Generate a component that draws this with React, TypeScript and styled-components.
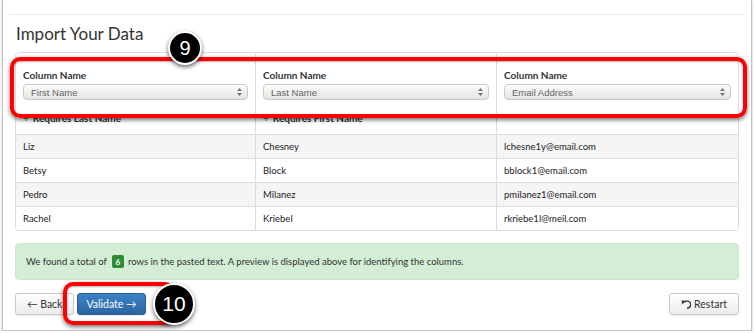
import React from "react";
import styled, { createGlobalStyle } from "styled-components";

const Global = createGlobalStyle`
  html, body { margin: 0; padding: 0; background: #fff; }
  body { font-family: Lato, "Open Sans", Arial, sans-serif; color: #333; }
`;

const Card = styled.div`
  position: relative;
  display: flow-root;
  box-sizing: border-box;
  margin-left: 2px;
  width: 750px;
  height: 331px;
  border: 1px solid #c4c4c4;
  border-top: none;
  box-shadow: 0 1px 2px rgba(0, 0, 0, 0.25);
  padding: 0 12px;
  background: #fff;
`;

const Rule = styled.div`
  margin: 14px -6px 0;
  height: 1px;
  background: #ececec;
`;

const Title = styled.h1`
  margin: 9px 0 0 1px;
  font-size: 17px;
  line-height: 20px;
  font-weight: 400;
  color: #333;
`;

const Table = styled.div`
  margin-top: 8px;
  border: 1px solid #dcdcdc;
  border-radius: 4px;
  display: grid;
  grid-template-columns: 240px 241px 1fr;
  overflow: hidden;
`;

const HeadCell = styled.div<{ $last?: boolean }>`
  box-sizing: border-box;
  height: 81px;
  padding: 16px 7px 0 7px;
  border-right: ${(p) => (p.$last ? "none" : "1px solid #dcdcdc")};
`;

const Label = styled.div`
  font-size: 10px;
  line-height: 12px;
  font-weight: 700;
  color: #333;
`;

const Select = styled.div`
  margin-top: 3px;
  box-sizing: border-box;
  height: 16px;
  border: 1px solid #c8c8c8;
  border-radius: 4px;
  background: linear-gradient(#fbfbfb, #e4e4e4);
  box-shadow: 0 1px 0 rgba(255, 255, 255, 0.8) inset;
  display: flex;
  align-items: center;
  justify-content: space-between;
  padding: 0 5px 0 7px;
  font-family: "Liberation Sans", Arial, sans-serif;
  font-size: 9.5px;
  color: #666;
`;

const Requires = styled.div`
  margin-top: 12px;
  font-size: 10px;
  line-height: 12px;
  font-weight: 700;
  color: #333;
  display: flex;
  gap: 4px;
  span { color: #3a9a3a; }
`;

const Cell = styled.div<{ $stripe?: boolean; $last?: boolean }>`
  box-sizing: border-box;
  height: 24px;
  border-top: 1px solid #dcdcdc;
  border-right: ${(p) => (p.$last ? "none" : "1px solid #dcdcdc")};
  background: ${(p) => (p.$stripe ? "#f5f5f5" : "#fff")};
  padding: 0 7px;
  display: flex;
  align-items: center;
  font-size: 9.5px;
  color: #222;
`;

const Alert = styled.div`
  margin-top: 12px;
  box-sizing: border-box;
  height: 37px;
  background: #d4edd5;
  border: 1px solid #cbe6c9;
  border-radius: 4px;
  padding: 0 10px;
  display: flex;
  align-items: center;
  font-size: 9.5px;
  color: #333;
`;

const Badge = styled.span`
  display: inline-flex;
  align-items: center;
  justify-content: center;
  margin: 0 4px 0 5px;
  width: 12px;
  height: 13px;
  border-radius: 2px;
  background: #2f8b36;
  color: #fff;
  font-weight: 700;
  font-size: 8px;
`;

const Actions = styled.div`
  margin-top: 13px;
  display: flex;
  align-items: center;
  gap: 3px;
`;

const Button = styled.button<{ $primary?: boolean }>`
  box-sizing: border-box;
  height: 22px;
  padding: 0 ${(p) => (p.$primary ? "8px" : "11px")};
  border-radius: 3px;
  font-family: inherit;
  font-size: 10.5px;
  display: inline-flex;
  align-items: center;
  gap: 3px;
  cursor: pointer;
  border: 1px solid ${(p) => (p.$primary ? "#2a5f95" : "#c9c9c9")};
  color: ${(p) => (p.$primary ? "#fff" : "#333")};
  background: ${(p) =>
    p.$primary
      ? "linear-gradient(#3d82c4, #2b66a3)"
      : "linear-gradient(#ffffff, #ececec)"};
  box-shadow: 0 1px 1px rgba(0, 0, 0, 0.08);
`;

const Spacer = styled.div`
  flex: 1;
`;

const Frame = styled.div<{ $l: number; $t: number; $w: number; $h: number }>`
  position: absolute;
  left: ${(p) => p.$l}px;
  top: ${(p) => p.$t}px;
  width: ${(p) => p.$w}px;
  height: ${(p) => p.$h}px;
  box-sizing: border-box;
  border: 4px solid #ff0000;
  border-radius: 10px;
  box-shadow: 0 2px 4px rgba(0, 0, 0, 0.55), inset 0 1px 2px rgba(0, 0, 0, 0.3);
  pointer-events: none;
`;

const Marker = styled.div<{ $l: number; $t: number; $d: number; $fs: number }>`
  position: absolute;
  left: ${(p) => p.$l}px;
  top: ${(p) => p.$t}px;
  width: ${(p) => p.$d}px;
  height: ${(p) => p.$d}px;
  box-sizing: border-box;
  border-radius: 50%;
  background: #000;
  border: 2px solid #fff;
  box-shadow: 0 2px 4px rgba(0, 0, 0, 0.6);
  color: #fff;
  font-family: "Liberation Sans", Arial, sans-serif;
  font-size: ${(p) => p.$fs}px;
  display: flex;
  align-items: center;
  justify-content: center;
`;

const Arrows = () => (
  <svg width="5" height="8" viewBox="0 0 5 8">
    <path d="M2.5 0 L5 3 H0 Z M2.5 8 L5 5 H0 Z" fill="#777" />
  </svg>
);

const UndoIcon = () => (
  <svg width="10" height="9" viewBox="0 0 10 9">
    <path d="M3.5 2.2 A3.6 3.6 0 1 1 6 8.3" fill="none" stroke="#333" strokeWidth="1.4" />
    <path d="M0.5 0.5 L4.8 0.8 L1.2 4.6 Z" fill="#333" />
  </svg>
);

const columns = [
  { sel: "First Name", req: "Requires Last Name" },
  { sel: "Last Name", req: "Requires First Name" },
  { sel: "Email Address", req: "" },
];

const rows = [
  ["Liz", "Chesney", "lchesne1y@email.com"],
  ["Betsy", "Block", "bblock1@email.com"],
  ["Pedro", "Milanez", "pmilanez1@email.com"],
  ["Rachel", "Kriebel", "rkriebe1l@meil.com"],
];

export default function App() {
  return (
    <>
      <Global />
      <Card>
        <Rule />
        <Title>Import Your Data</Title>
        <Table>
          {columns.map((c, i) => (
            <HeadCell key={i} $last={i === 2}>
              <Label>Column Name</Label>
              <Select>
                <span>{c.sel}</span>
                <Arrows />
              </Select>
              {c.req && (
                <Requires>
                  <span>+</span>
                  {c.req}
                </Requires>
              )}
            </HeadCell>
          ))}
          {rows.map((r, ri) =>
            r.map((v, ci) => (
              <Cell key={`${ri}-${ci}`} $stripe={ri % 2 === 0} $last={ci === 2}>
                {v}
              </Cell>
            ))
          )}
        </Table>
        <Alert>
          We found a total of <Badge>6</Badge> rows in the pasted text. A preview is displayed
          above for identifying the columns.
        </Alert>
        <Actions>
          <Button>← Back</Button>
          <Button $primary>Validate →</Button>
          <Spacer />
          <Button>
            <UndoIcon />
            Restart
          </Button>
        </Actions>
        <Frame $l={60} $t={282} $w={112} $h={43} />
        <Marker $l={150} $t={283} $d={42} $fs={21}>10</Marker>
        <Frame $l={7} $t={57} $w={737} $h={61} />
        <Marker $l={165} $t={31} $d={34} $fs={20}>9</Marker>
      </Card>
    </>
  );
}
